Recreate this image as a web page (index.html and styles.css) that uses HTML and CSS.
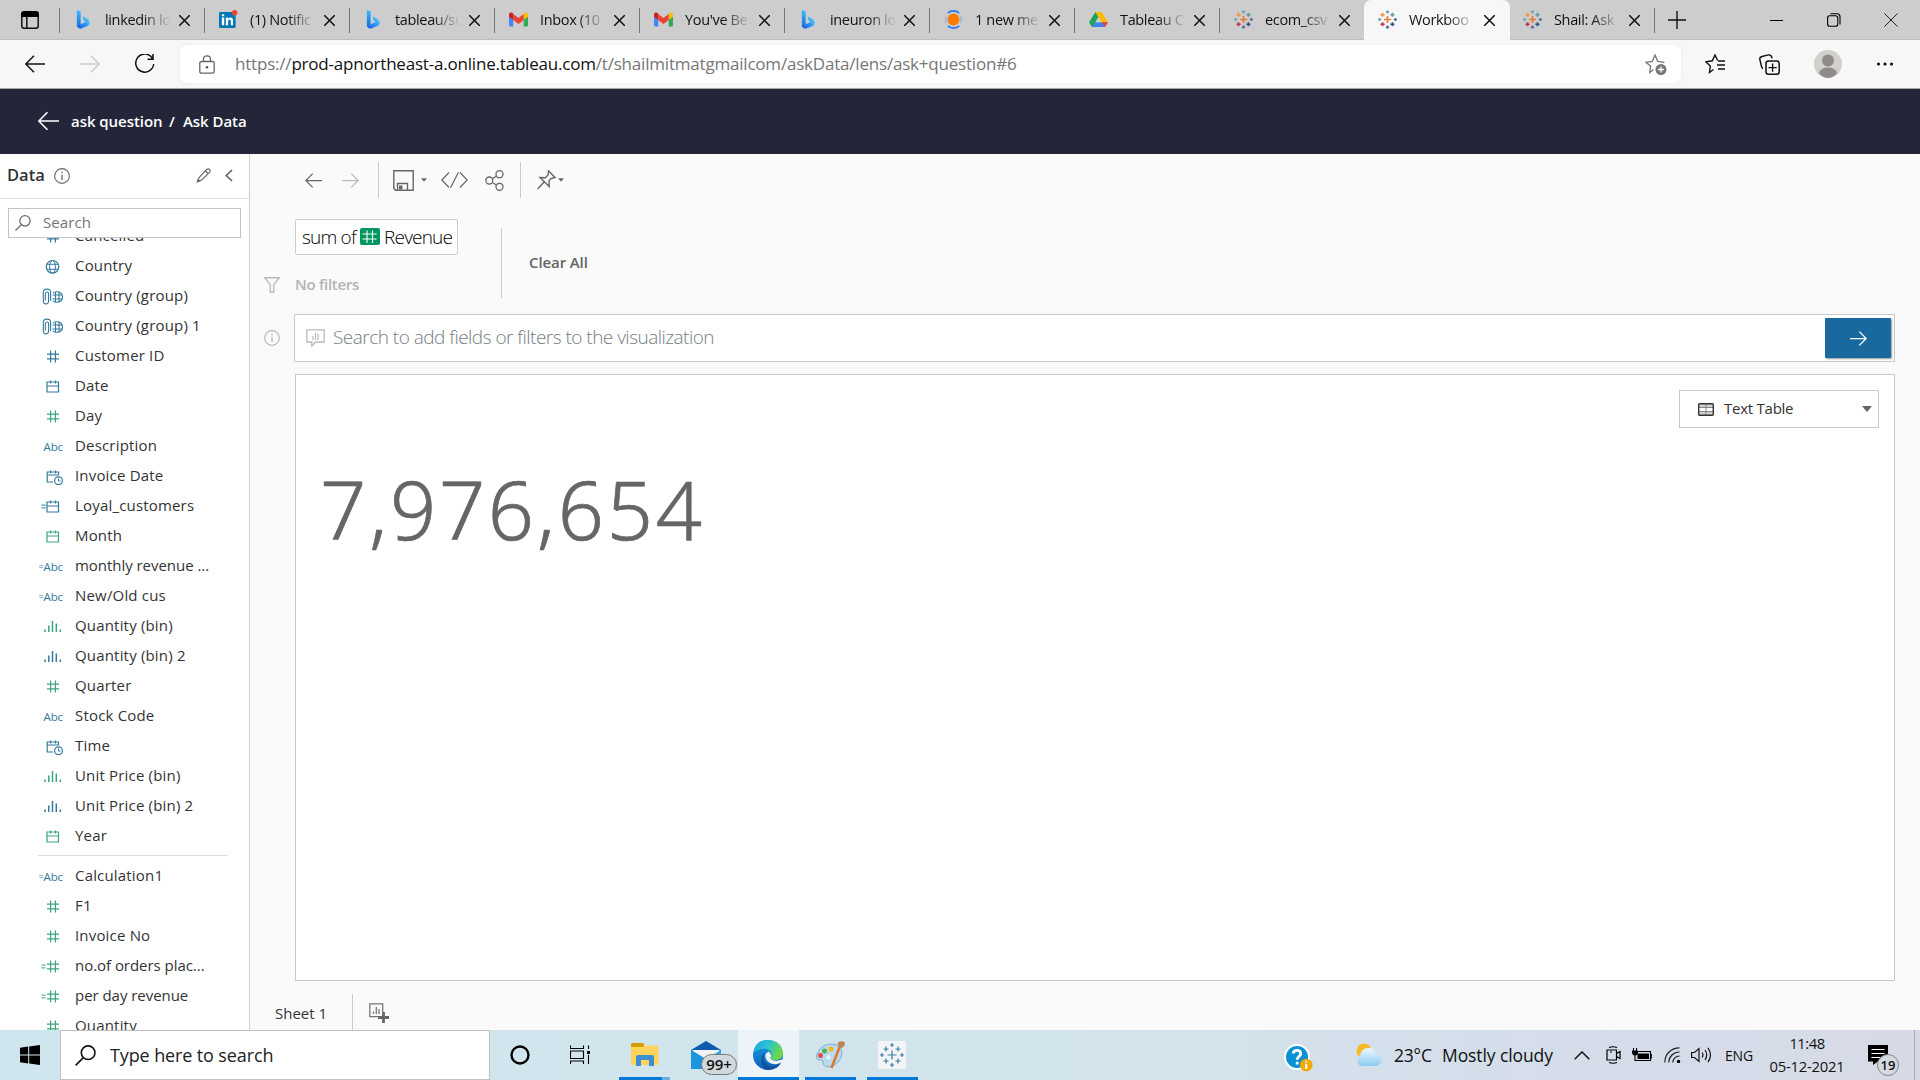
FILE: index.html
```html
<!DOCTYPE html>
<html lang="en">
<head>
<meta charset="utf-8">
<title>Ask Data</title>
<link rel="stylesheet" href="styles.css">
</head>
<body>
<svg class="defs" width="0" height="0">
  <defs>
    <linearGradient id="bingA" x1="0" y1="0" x2="0" y2="1"><stop offset="0" stop-color="#37bdff"/><stop offset="1" stop-color="#1a67dc"/></linearGradient>
    <linearGradient id="bingB" x1="0" y1="1" x2="1" y2="0"><stop offset="0" stop-color="#1b48ef"/><stop offset=".5" stop-color="#2a9af3"/><stop offset="1" stop-color="#5fe0ff"/></linearGradient>
    <linearGradient id="edgeA" x1="0" y1="0" x2="1" y2=".4"><stop offset="0" stop-color="#1b9de2"/><stop offset=".5" stop-color="#2bc3d2"/><stop offset="1" stop-color="#6bd949"/></linearGradient>
    <linearGradient id="edgeB" x1="0" y1="0" x2="0" y2="1"><stop offset="0" stop-color="#1b9de2"/><stop offset="1" stop-color="#0d60b8"/></linearGradient>
    <linearGradient id="cloud" x1="0" y1="0" x2="0" y2="1"><stop offset="0" stop-color="#eef8ff"/><stop offset="1" stop-color="#8ccbf0"/></linearGradient>
    <symbol id="bing" viewBox="0 0 14 20"><path d="M0 0 4 1.6V14.5L1.5 18.8 0 16.5Z" fill="url(#bingA)"/><path d="M6 6.5 11 9.3Q13.5 10.8 13.5 13.5 13.5 15.5 11.5 16.8L4.5 19.6Q2 20.2 0 16.8L9.2 12.5 7.2 11Z" fill="url(#bingB)"/></symbol>
    <symbol id="gmail" viewBox="0 0 19 14"><path d="M0 2V12.5Q0 14 1.5 14H4.3V6Z" fill="#4285f4"/><path d="M19 2V12.5Q19 14 17.5 14H14.7V6Z" fill="#34a853"/><path d="M0 2.2Q0 0 2 0 3 0 4.3 1.2V7.5L0 4.2Z" fill="#c5221f"/><path d="M19 2.2Q19 0 17 0 16 0 14.7 1.2V7.5L19 4.2Z" fill="#fbbc04"/><path d="M4.3 1.5 9.5 5.6 14.7 1.5V7.5L9.5 11.5 4.3 7.5Z" fill="#ea4335"/></symbol>
    <symbol id="tabl" viewBox="0 0 20 20"><g fill="none" stroke-width="1.8"><path d="M10 6.2V13.8M6.2 10H13.8" stroke="#eb7a35"/><path d="M4.8 2.8V7.2M2.6 5H7" stroke="#f0973a"/><path d="M15.2 2.8V7.2M13 5H17.4" stroke="#6c97a8"/><path d="M4.8 12.8V17.2M2.6 15H7" stroke="#c8304a"/><path d="M15.2 12.8V17.2M13 15H17.4" stroke="#2c5488"/><path d="M10 .3V3.7M8.3 2H11.7M1.7 8.3V11.7M0 10H3.4" stroke="#7aa5b8"/><path d="M10 16.3V19.7M8.3 18H11.7M18.3 8.3V11.7M16.6 10H20" stroke="#676e9c"/></g></symbol>
    <symbol id="x" viewBox="0 0 10 10"><path d="M0 0 10 10M10 0 0 10" fill="none" stroke="currentColor" stroke-width="1.4"/></symbol>
    <symbol id="left" viewBox="0 0 20 18"><path d="M20 9H1M9 .7.8 9 9 17.3" fill="none" stroke="currentColor" stroke-width="1.5"/></symbol>
    <symbol id="right" viewBox="0 0 20 18"><path d="M0 9H19M11 .7 19.2 9 11 17.3" fill="none" stroke="currentColor" stroke-width="1.5"/></symbol>
    <symbol id="info" viewBox="0 0 16 16"><circle cx="8" cy="8" r="7.4" fill="none" stroke="currentColor" stroke-width="1.1"/><path d="M8 6.7V12M8 3.8V5.2" stroke="currentColor" stroke-width="1.3"/></symbol>
    <symbol id="mag" viewBox="0 0 20 20"><circle cx="12.5" cy="7.3" r="6.5" fill="none" stroke="currentColor" stroke-width="1.5"/><path d="M8 12 .6 19.4" stroke="currentColor" stroke-width="1.5"/></symbol>
    <symbol id="caret" viewBox="0 0 10 6"><path d="M0 0H10L5 6Z" fill="currentColor"/></symbol>
    <symbol id="num" viewBox="0 0 26 16"><path d="M10.6 2V14M15.4 2V14M7 5.6H19M7 10.4H19" fill="none" stroke="currentColor" stroke-width="1.2"/></symbol>
    <symbol id="eq" viewBox="0 0 26 16"><path d="M1.4 6.6H5.6M1.4 9.4H5.6" stroke="currentColor" stroke-width="1"/></symbol>
    <symbol id="cal" viewBox="0 0 26 16"><path d="M7 3.5H18.5V13.5H7ZM7 7.5H18.5M10.5 2V5M15.5 2V5" fill="none" stroke="currentColor" stroke-width="1.2"/></symbol>
    <symbol id="calt" viewBox="0 0 26 16"><path d="M13 13.5H7.2V3.5H18.5V7M7.2 6.5H18.5M10.5 2V5M15.5 2V5" fill="none" stroke="currentColor" stroke-width="1.2"/><circle cx="18.5" cy="12.2" r="3.9" fill="none" stroke="currentColor" stroke-width="1.2"/><path d="M18.5 10V12.5H20.5" fill="none" stroke="currentColor"/></symbol>
    <symbol id="globe" viewBox="0 0 26 16"><g fill="none" stroke="currentColor"><circle cx="12.5" cy="8.3" r="6.3" stroke-width="1.2"/><ellipse cx="12.5" cy="8.3" rx="2.9" ry="6.3"/><path d="M6.7 5.8H18.3M6.7 10.8H18.3"/></g></symbol>
    <symbol id="clip" viewBox="0 0 26 16"><g fill="none" stroke="currentColor" stroke-width="1.1"><path d="M5.3 12V5.5Q5.3 3.5 7 3.5T8.6 5.5V12Q8.6 15.4 6 15.4T3.3 12V4Q3.3.6 7 .6T10.6 4V12.5"/><path d="M13 4.6Q14.3 3.2 16.5 3.2 22.5 3.2 22.5 8.5 22.5 13.7 16.5 13.7 14.3 13.7 13 12.3M12.5 6.5H22M12.5 10.5H22M15.5 3.5V13.5M19 4V13"/></g></symbol>
    <symbol id="bars" viewBox="0 0 26 16"><path d="M5 11V13.5M8.8 7V13.5M12.5 2.5V13.5M16.3 5V13.5M20.3 11V13.5" stroke="currentColor" stroke-width="1.5"/></symbol>
  </defs>
</svg>

<div class="tabs">
  <div class="tab-actions"><svg width="18" height="18" viewBox="0 0 18 18"><path d="M.8 5V15Q.8 17.2 3 17.2H15Q17.2 17.2 17.2 15V5M5.8 5V17" fill="none" stroke="#111" stroke-width="1.5"/><path d="M0 6V3Q0 0 3 0H15Q18 0 18 3V6Z" fill="#000"/></svg></div>
  <div class="tab"><svg class="fav"><use href="#bing"/></svg><span>linkedin lo</span><svg class="close"><use href="#x"/></svg></div>
  <div class="tab"><svg class="fav" viewBox="0 0 20 20"><rect y="2" width="17.5" height="17" rx="1.5" fill="#0077b5"/><path d="M3 8H5.5V16H3ZM3 4.5H5.5V6.7H3ZM7.2 8H9.5V9.2Q10.3 7.8 12 7.8 14.8 7.8 14.8 11V16H12.4V11.5Q12.4 9.9 11.2 9.9 9.6 9.9 9.6 11.5V16H7.2Z" fill="#fff"/><circle cx="16.5" cy="3" r="2.9" fill="#ef4136"/></svg><span>(1) Notific</span><svg class="close"><use href="#x"/></svg></div>
  <div class="tab"><svg class="fav"><use href="#bing"/></svg><span>tableau/su</span><svg class="close"><use href="#x"/></svg></div>
  <div class="tab"><svg class="fav"><use href="#gmail"/></svg><span>Inbox (10</span><svg class="close"><use href="#x"/></svg></div>
  <div class="tab"><svg class="fav"><use href="#gmail"/></svg><span>You've Be</span><svg class="close"><use href="#x"/></svg></div>
  <div class="tab"><svg class="fav"><use href="#bing"/></svg><span>ineuron lo</span><svg class="close"><use href="#x"/></svg></div>
  <div class="tab"><svg class="fav" viewBox="0 0 20 20"><circle cx="10" cy="10" r="6.3" fill="#ff7a00"/><path d="M4 3.2Q6.5.9 10 .9T16 3.2M4 16.8Q6.5 19.1 10 19.1T16 16.8" fill="none" stroke="#2879f6" stroke-width="1.8"/><path d="M2.3 6.5Q1 10 2.3 13.5M17.7 6.5Q19 10 17.7 13.5" fill="none" stroke="#94b5ea" stroke-width="1.5"/></svg><span>1 new me</span><svg class="close"><use href="#x"/></svg></div>
  <div class="tab"><svg class="fav" viewBox="0 0 20 18"><path d="M6.7 1H13.3L10 6.7 3.5 17.5 0 12Z" fill="#1fa15a"/><path d="M6.7 1H13.3L20 12H13.2Z" fill="#ffba00"/><path d="M6.7 12H20L16.7 17H3.5Z" fill="#3f80f2"/><path d="M13.2 12H20L16.7 17Z" fill="#ea4335"/><path d="M10 6.7 13.2 12H6.8Z" fill="#cdcdcd"/></svg><span>Tableau C</span><svg class="close"><use href="#x"/></svg></div>
  <div class="tab"><svg class="fav"><use href="#tabl"/></svg><span>ecom_csv</span><svg class="close"><use href="#x"/></svg></div>
  <div class="tab active"><svg class="fav"><use href="#tabl"/></svg><span>Workboo</span><svg class="close"><use href="#x"/></svg></div>
  <div class="tab last"><svg class="fav"><use href="#tabl"/></svg><span>Shail: Ask</span><svg class="close"><use href="#x"/></svg></div>
  <svg class="plus" viewBox="0 0 18 18"><path d="M9 0V18M0 9H18" stroke="#111" stroke-width="1.4"/></svg>
  <div class="win">
    <svg width="14" height="14" viewBox="0 0 14 14"><path d="M0 7.5H13" stroke="#000"/></svg>
    <svg width="14" height="14" viewBox="0 0 14 14"><path d="M2.5 2.7H8.5Q10.8 2.7 10.8 5V11Q10.8 13.3 8.5 13.3H2.8Q.6 13.3.6 11V5Q.6 2.7 2.5 2.7ZM3.5.7H10Q13 .7 13 3.7V11.5" fill="none" stroke="#000" stroke-width="1.1"/></svg>
    <svg width="14" height="14" viewBox="0 0 14 14"><path d="M.5.5 13.5 13.5M13.5.5.5 13.5" stroke="#222"/></svg>
  </div>
</div>

<div class="nav">
  <div class="nav-btn"><svg width="20" height="18"><use href="#left"/></svg></div>
  <div class="nav-btn off"><svg width="20" height="18"><use href="#right"/></svg></div>
  <div class="nav-btn"><svg width="21" height="20" viewBox="0 0 21 20"><path d="M18.5 4.5A9 9 0 1 0 19.7 10M19 0V5.3H13.5" fill="none" stroke="#111" stroke-width="1.5"/></svg></div>
  <div class="address">
    <svg width="16" height="19" viewBox="0 0 16 19"><path d="M2.5 6.5H13.5Q15.2 6.5 15.2 8V16.5Q15.2 18.2 13.5 18.2H2.5Q.8 18.2.8 16.5V8Q.8 6.5 2.5 6.5ZM4.5 6.5V4Q4.5.8 8 .8T11.5 4V6.5" fill="none" stroke="#666" stroke-width="1.3"/><circle cx="8" cy="12.3" r="1.3" fill="#555"/></svg>
    <div class="url">https://<b>prod-apnortheast-a.online.tableau.com</b>/t/shailmitmatgmailcom/askData/lens/ask+question#6</div>
    <svg width="22" height="21" viewBox="0 0 22 21"><path d="M8.5 15.5 4.8 18.5 5.5 12 .8 8.3 7.3 7.3 10 1 12.7 7.3 19.5 8.3" fill="none" stroke="#777" stroke-width="1.3"/><circle cx="16" cy="15.5" r="5.5" fill="#767676"/><path d="M16 12.5V18.5M13 15.5H19" stroke="#fff" stroke-width="1.3"/></svg>
  </div>
  <div class="nav-right">
    <svg width="20" height="20" viewBox="0 0 20 20"><path d="M8.5 15.5 4.5 18.5 5.3 12 .8 7.8 7.3 6.8 10 1 12.6 6.5M13 7H20M12 11H20M13 15H20" fill="none" stroke="#111" stroke-width="1.4"/></svg>
    <svg width="21" height="21" viewBox="0 0 21 21"><path d="M4 14.5Q2.8 14 2.5 12.5L.8 5.5Q.5 3 3 2.5L9.5.9Q12.5.6 13 4.3" fill="none" stroke="#111" stroke-width="1.4"/><rect x="7" y="7" width="13.2" height="13.2" rx="2.5" fill="none" stroke="#111" stroke-width="1.5"/><path d="M13.6 9.5V17.7M9.5 13.6H17.7" stroke="#111" stroke-width="1.4"/></svg>
    <svg width="28" height="28" viewBox="0 0 28 28"><circle cx="14" cy="14" r="14" fill="#d2d0cd"/><circle cx="14" cy="10.5" r="6" fill="#8f8b88"/><path d="M5 23Q6.5 17.5 14 17.5T23 23Q19 28 14 28T5 23Z" fill="#8f8b88"/></svg>
    <svg width="18" height="4" viewBox="0 0 18 4"><g fill="#111"><circle cx="2.5" cy="2" r="1.6"/><circle cx="9" cy="2" r="1.6"/><circle cx="15.5" cy="2" r="1.6"/></g></svg>
  </div>
</div>

<header class="crumbs">
  <svg width="21" height="20"><use href="#left"/></svg>
  <span class="crumb-a">ask question</span><span class="slash">/</span><span class="crumb-b">Ask Data</span>
</header>

<div class="app">
  <aside class="side">
    <div class="side-head">
      <h1>Data</h1>
      <svg class="i" width="16" height="16"><use href="#info"/></svg>
      <svg class="pen" width="15" height="15" viewBox="0 0 15 15"><path d="M3.2 9.3 10.7 1.5Q12.2.2 13.5 1.5T13.5 4.3L5.7 12 2 13.4ZM9.5 3 12 5.5" fill="none" stroke="#666" stroke-width="1.1"/><path d="M.3 14.7 1.8 10.5 4.5 13.2Z" fill="#666"/></svg>
      <svg width="8" height="13" viewBox="0 0 8 13"><path d="M7 1 1.3 6.5 7 12" fill="none" stroke="#666" stroke-width="1.7"/></svg>
    </div>
    <div class="side-search"><svg width="16" height="16"><use href="#mag"/></svg><span>Search</span></div>
    <div class="fields">
      <div class="f"><svg><use href="#num"/></svg><span>Cancelled</span></div>
      <div class="f"><svg><use href="#globe"/></svg><span>Country</span></div>
      <div class="f"><svg><use href="#clip"/></svg><span>Country (group)</span></div>
      <div class="f"><svg><use href="#clip"/></svg><span>Country (group) 1</span></div>
      <div class="f"><svg><use href="#num"/></svg><span>Customer ID</span></div>
      <div class="f"><svg><use href="#cal"/></svg><span>Date</span></div>
      <div class="f g"><svg><use href="#num"/></svg><span>Day</span></div>
      <div class="f"><i>Abc</i><span>Description</span></div>
      <div class="f"><svg><use href="#calt"/></svg><span>Invoice Date</span></div>
      <div class="f"><svg><use href="#eq"/><use href="#cal"/></svg><span>Loyal_customers</span></div>
      <div class="f g"><svg><use href="#cal"/></svg><span>Month</span></div>
      <div class="f"><i><s>=</s>Abc</i><span class="long">monthly revenue ...</span></div>
      <div class="f"><i><s>=</s>Abc</i><span>New/Old cus</span></div>
      <div class="f g"><svg><use href="#bars"/></svg><span>Quantity (bin)</span></div>
      <div class="f"><svg><use href="#bars"/></svg><span>Quantity (bin) 2</span></div>
      <div class="f g"><svg><use href="#num"/></svg><span>Quarter</span></div>
      <div class="f"><i>Abc</i><span>Stock Code</span></div>
      <div class="f"><svg><use href="#calt"/></svg><span>Time</span></div>
      <div class="f g"><svg><use href="#bars"/></svg><span>Unit Price (bin)</span></div>
      <div class="f"><svg><use href="#bars"/></svg><span>Unit Price (bin) 2</span></div>
      <div class="f g"><svg><use href="#cal"/></svg><span>Year</span></div>
      <hr>
      <div class="f"><i><s>=</s>Abc</i><span>Calculation1</span></div>
      <div class="f g"><svg><use href="#num"/></svg><span>F1</span></div>
      <div class="f g"><svg><use href="#num"/></svg><span>Invoice No</span></div>
      <div class="f g"><svg><use href="#eq"/><use href="#num"/></svg><span class="long">no.of orders plac...</span></div>
      <div class="f g"><svg><use href="#eq"/><use href="#num"/></svg><span class="long">per day revenue</span></div>
      <div class="f g"><svg><use href="#num"/></svg><span>Quantity</span></div>
    </div>
  </aside>

  <main class="main">
    <div class="tools">
      <svg class="t-back" width="17" height="15"><use href="#left"/></svg>
      <svg class="t-fwd" width="17" height="15"><use href="#right"/></svg>
      <div class="bar"></div>
      <svg class="t-save" width="21" height="21" viewBox="0 0 21 21"><path d="M.8.8H20.2V20.2H2.5L.8 18.5ZM4.5 20V13.5H14.5V20" fill="none" stroke="#666" stroke-width="1.4"/><path d="M6 15.5H9.5V19.5H6Z" fill="#666"/></svg>
      <svg class="t-c1" width="6" height="4"><use href="#caret"/></svg>
      <svg class="t-code" width="27" height="16" viewBox="0 0 27 16"><path d="M8 .5.8 8 8 15.5M19 .5 26.2 8 19 15.5M17.5.3 9.5 15.7" fill="none" stroke="#666" stroke-width="1.2"/></svg>
      <svg class="t-share" width="19" height="21" viewBox="0 0 19 21"><g fill="none" stroke="#666" stroke-width="1.3"><circle cx="4.3" cy="10.5" r="3.5"/><circle cx="14.5" cy="4.2" r="3.5"/><circle cx="14.5" cy="16.8" r="3.5"/><path d="M7.3 8.7 11.5 6M7.3 12.5 11.5 15"/></g></svg>
      <div class="bar"></div>
      <svg class="t-pin" width="19" height="20" viewBox="0 0 19 20"><path d="M11.5.8 18 7.5 14 8.5 12 11 12.2 16.5 3 7.5 8.5 7.8 11 5ZM7 12 .7 19" fill="none" stroke="#666" stroke-width="1.4"/></svg>
      <svg class="t-c2" width="6" height="4"><use href="#caret"/></svg>
    </div>

    <div class="query">
      <div class="query-left">
        <div class="pill"><span class="p1">sum of</span><svg width="20" height="17" viewBox="0 0 20 17"><rect width="20" height="17" rx="2" fill="#00965f"/><path d="M7 2.5V15M12.5 2.5V15M2.5 6H16.5M2.5 11H16.5" stroke="#fff" stroke-width="1.1"/></svg><span class="p2">Revenue</span></div>
        <div class="nofilter"><svg width="16" height="16" viewBox="0 0 16 16"><path d="M.8.8H15.2L9.8 7.5V15H6.2V7.5Z" fill="none" stroke="#bbb" stroke-width="1.4"/></svg><span>No filters</span></div>
      </div>
      <div class="clear"><span>Clear All</span></div>
    </div>

    <div class="ask">
      <svg class="ask-i" width="16" height="16"><use href="#info"/></svg>
      <div class="ask-box">
        <svg width="19" height="18" viewBox="0 0 19 18"><path d="M.8.8H18.2V13H9.5L5.8 17V13H.8Z" fill="none" stroke="#bbb" stroke-width="1.3"/><path d="M7 7V11M9.5 3.5V11M12 5V11" stroke="#bbb" stroke-width="1.2"/></svg>
        <span>Search to add fields or filters to the visualization</span>
        <div class="go"><svg width="19" height="15"><use href="#right"/></svg></div>
      </div>
    </div>

    <div class="viz">
      <div class="chart-type"><svg width="16" height="13" viewBox="0 0 16 13"><rect x=".7" y=".7" width="14.6" height="11.6" rx="1" fill="#d0d0d0"/><path d="M1 4.8H15V8.2H1Z" fill="#fff"/><path d="M.7 4.5H15.3M.7 8.5H15.3M8 .7V12" stroke="#888"/><rect x=".7" y=".7" width="14.6" height="11.6" rx="1" fill="none" stroke="#333" stroke-width="1.4"/></svg><span>Text Table</span><svg class="dd" width="10" height="6"><use href="#caret"/></svg></div>
      <div class="total">7,976,654</div>
    </div>

    <div class="sheets"><div class="sheet">Sheet 1</div><svg width="20" height="20" viewBox="0 0 20 20"><path d="M9.5 13.7H.8V.8H13.7V9" fill="none" stroke="#777" stroke-width="1.3"/><path d="M4.5 8.5V11M7.3 4V11M10 6V11" stroke="#777" stroke-width="1.3"/><path d="M14.5 9V20M9 14.5H20" stroke="#666" stroke-width="2.8"/></svg></div>
  </main>
</div>

<footer class="taskbar">
  <div class="start"><svg width="20" height="20" viewBox="0 0 20 20"><path d="M0 2.8 8.2 1.6V9.5H0ZM9.2 1.5 20 0V9.5H9.2ZM0 10.5H8.2V18.4L0 17.2ZM9.2 10.5H20V20L9.2 18.5Z"/></svg></div>
  <div class="find"><svg width="21" height="21"><use href="#mag"/></svg><span>Type here to search</span></div>
  <div class="app-i cortana"><svg width="20" height="20" viewBox="0 0 20 20"><circle cx="10" cy="10" r="8.5" fill="none" stroke="#000" stroke-width="2.4"/></svg></div>
  <div class="app-i view"><svg width="20" height="20" viewBox="0 0 20 20"><path d="M.5.5V3.5H13.5V.5M.5 19V16H13.5V19M.5 6H13.5V13.5H.5ZM18.5.5V4M18.5 10V19" fill="none" stroke="#000" stroke-width="1.1"/><path d="M17 6H20V9H17Z"/></svg></div>
  <div class="app-i files"><svg width="28" height="24" viewBox="0 0 28 24"><path d="M0 1Q0 0 1 0H12L14 2.5H26.5Q27.5 2.5 27.5 3.5V22H1Q0 22 0 21Z" fill="#ffd45c"/><path d="M0 1Q0 0 1 0H11.5Q13 0 13 1.5 13 4 11 4H0Z" fill="#d99a00"/><path d="M5 23V14Q5 12 7 12H21Q23 12 23 14V23H18V17H10V23Z" fill="#3e8ed4"/></svg></div>
  <div class="app-i mail"><svg width="30" height="28" viewBox="0 0 30 28"><path d="M0 9 15 0 30 9V12H0Z" fill="#0b5cae"/><path d="M1.5 9H28.5V18H1.5Z" fill="#f3f3f3"/><path d="M0 9 15 18 30 9V28H0Z" fill="#28a8ea"/><path d="M0 9 30 28H0Z" fill="#1b96de"/></svg><b class="cnt">99+</b></div>
  <div class="app-i edge"><svg width="30" height="30" viewBox="0 0 30 30"><circle cx="15" cy="15" r="15" fill="url(#edgeB)"/><path d="M.3 13Q1.8 0 15 0 29 1 30 13 30 20 22 20 17 20 17.5 17.5 19.5 15 18 12 15 7.5 8.5 9 2.5 10.5.3 13Z" fill="url(#edgeA)"/><path d="M12 12Q8 20 14 24.5 20 29 28 23 24 30 15 30 9 29 8.5 21 8.5 14 12 12Z" fill="#124f9e"/><path d="M15.5 11.5Q11 14 13 19 16 25 24 24 28 23 29 21.5L32 20 29 19.5Q24 21.5 19 20 16.5 18.8 18 16.5 19 14 15.5 11.5Z" fill="#edf4f9"/></svg></div>
  <div class="app-i paint"><svg width="31" height="30" viewBox="0 0 31 30"><path d="M3 12Q7 4 17 4 27 5 27 13 26 24 14 27 8 27 8 22 8 19 4 20-1 19 3 12Z" fill="#b9d9ee" stroke="#88aac5"/><circle cx="5.5" cy="15.5" r="2.5" fill="#e14b42"/><circle cx="9.5" cy="11" r="2.5" fill="#48b34b"/><circle cx="16" cy="9" r="2.6" fill="#f7b51b"/><circle cx="13.5" cy="17.5" r="2.2" fill="#e6f2fa"/><path d="M25 6 16.5 28" stroke="#d8792e" stroke-width="2.5"/><path d="M24 7 27 8Q31 5 29.5 2 24.5 0 22.5 3Z" fill="#ba8559"/></svg></div>
  <div class="app-i tab-i"><svg width="28" height="28" viewBox="0 0 28 28"><rect width="28" height="28" fill="#f3f4f5"/><path d="M14 9.5V18.5M9.5 14H18.5M8 5.5V10.5M5.5 8H10.5M20 5.5V10.5M17.5 8H22.5M8 17.5V22.5M5.5 20H10.5M20 17.5V22.5M17.5 20H22.5M14 2V6M12 4H16M14 22V26M12 24H16M4 12V16M2 14H6M24 12V16M22 14H26" stroke="#3c7ca6" stroke-width="1.2"/></svg></div>
  <div class="tray">
    <svg class="help" width="29" height="32" viewBox="0 0 29 32"><circle cx="13" cy="15" r="13" fill="#fff"/><circle cx="13" cy="15" r="11" fill="#0a90d4"/><path d="M9.3 11.5Q9.3 8.3 13 8.3T16.7 11.8Q16.7 13.5 14.5 15 13.2 16 13.2 17.8M13.2 19.8V22.5" fill="none" stroke="#fff" stroke-width="2.8"/><circle cx="22.3" cy="23" r="6.3" fill="#f2a900"/><path d="M22.3 21.8V27M22.3 18.8V20.6" stroke="#fff" stroke-width="2"/></svg>
    <svg class="wx" width="26" height="24" viewBox="0 0 26 24"><circle cx="8" cy="8" r="7.5" fill="#f9b92c"/><path d="M6 23Q1 22 1.500 17.500 2.500 13.500 4 12 6 5 12 5 18.500 5 19.500 10 25 11 25.500 17 24.500 23 19 23Z" fill="url(#cloud)"/></svg>
    <span class="deg">23°C</span><span class="wtext">Mostly cloudy</span>
    <svg class="chev" width="16" height="9" viewBox="0 0 16 9"><path d="M.7 8.3 8 .9 15.3 8.3" fill="none" stroke="#111" stroke-width="1.4"/></svg>
    <svg class="cam" width="15" height="18" viewBox="0 0 15 18"><path d="M1 4H10.5V14H1ZM10.5 7.5 14 5.5V12.5L10.5 10.5M3 1.5Q7 0 11 1.5M3 16.5Q7 18 11 16.5" fill="none" stroke="#000" stroke-width="1.2"/><path d="M4 6H6" stroke="#000"/></svg>
    <svg class="bat" width="20" height="14" viewBox="0 0 20 14"><path d="M6 3.5H18.5V12.5H3V8M18.5 6.5H19.8V10H18.5M1.5 0V3M4.5 0V3M3 7V10" fill="none" stroke="#000" stroke-width="1.1"/><path d="M5.5 5.5H17V11H5.5ZM0 2.5H6V5Q5.5 7.5 3 7.5T0 5Z"/></svg>
    <svg class="wifi" width="17" height="16" viewBox="0 0 17 16"><path d="M.8 15.5A14.5 14.5 0 0 1 15.5.8M4.8 15.5A10.5 10.5 0 0 1 15.5 5M8.8 15.5A6.8 6.8 0 0 1 15.5 9" fill="none" stroke="#222" stroke-width="1.2"/><circle cx="14.5" cy="14.5" r="1.7"/></svg>
    <svg class="vol" width="21" height="16" viewBox="0 0 21 16"><path d="M.6 5.5H3.5L8 1.5V14.5L3.5 10.5H.6ZM11 5.5Q13 8 11 10.5M14 3Q17.5 8 14 13M17 .8Q22 8 17 15.2" fill="none" stroke="#111" stroke-width="1.2"/></svg>
    <span class="eng">ENG</span>
    <div class="clock"><div class="time">11:48</div><div class="date">05-12-2021</div></div>
    <div class="note"><svg width="20" height="20" viewBox="0 0 20 20"><path d="M0 0H20V16.5H10L5 20V16.5H0Z"/><path d="M3.5 4.5H16.5M3.5 8.5H16.5M3.5 12.5H12" stroke="#fff" stroke-width="1.2"/></svg><b>19</b></div>
    <div class="desk"></div>
  </div>
</footer>
</body>
</html>
```
FILE: styles.css
```css
* { box-sizing: border-box; }
body { margin: 0; width: 1920px; height: 1080px; overflow: hidden; font-family: "Open Sans", "Noto Sans", sans-serif; font-size: 15px; color: #111; background: #fafafa; display: flex; flex-direction: column; white-space: nowrap; }
svg { display: block; flex: none; }
.defs { position: absolute; }
span { flex: none; }

/* browser tabs */
.tabs { height: 40px; flex: none; display: flex; align-items: center; background: #cdcdcd; border-bottom: 1px solid #bdbdbd; }
.tab-actions { width: 59px; padding-left: 21px; }
.tab { width: 145px; height: 39px; flex: none; display: flex; align-items: center; padding-left: 15px; background: linear-gradient(#777, #777) 0 8px / 1px 25px no-repeat; }
.tab .fav { width: 19px; height: 19px; }
.tab span { width: 68px; margin-left: 12px; overflow: hidden; font-size: 14.5px; letter-spacing: -.35px; color: #111; -webkit-mask-image: linear-gradient(90deg, #000 55%, transparent 97%); mask-image: linear-gradient(90deg, #000 55%, transparent 97%); }
.tab .close { width: 11px; height: 11px; margin: 2px 0 0 6px; }
.tab.active { width: 146px; height: 40px; padding-left: 14px; background: #f7f7f7; border-radius: 7px 7px 0 0; }
.tab.active .close { margin-left: 7px; }
.tab.last { background-position: 144px 8px; padding-left: 13px; }
.tab.last .close { margin-left: 7px; }
.plus { width: 18px; height: 18px; margin-left: 13px; }
.win { margin-left: auto; display: flex; gap: 43px; padding-right: 22px; }

/* address row */
.nav { height: 49px; flex: none; display: flex; align-items: center; background: #f7f7f7; border-bottom: 1px solid #aaa; padding-left: 7px; }
.nav-btn { width: 55px; display: flex; justify-content: center; }
.nav-btn.off { color: #ccc; }
.address { width: 1501px; height: 38px; margin-left: 8px; display: flex; align-items: center; background: #fff; border-radius: 6px; padding: 0 14px 0 19px; box-shadow: 0 0 3px #e4e4e4; }
.url { margin-left: 20px; flex: 1; font-size: 17px; letter-spacing: -.2px; padding-bottom: 2px; color: #767676; }
.url b { font-weight: 400; color: #111; }
.nav-right { display: flex; align-items: center; padding-left: 24px; gap: 34px; }

.crumbs { height: 65px; flex: none; display: flex; align-items: center; background: #232638; color: #fff; padding: 0 0 2px 38px; font-weight: 600; font-size: 15px; letter-spacing: -.05px; }
.crumb-a { margin-left: 12px; width: 98px; }
.slash { width: 14px; }

/* data pane */
.app { height: 876px; flex: none; display: flex; }
.side { width: 250px; height: 876px; flex: none; background: #fff; border-right: 1px solid #d0d0d0; display: flex; flex-direction: column; }
.side-head { height: 45px; flex: none; display: flex; align-items: center; padding: 0 16px 1px 7px; border-bottom: 1px solid #e0e0e0; color: #666; }
.side-head h1 { margin: 0; width: 47px; padding-bottom: 3px; font-size: 16.5px; font-weight: 600; color: #333; }
.pen { margin: 0 14px 0 auto; }
.side-search { height: 30px; margin: 9px 8px 0; flex: none; display: flex; align-items: center; border: 1px solid #c4c4c4; padding-left: 6px; color: #666; }
.side-search span { margin-left: 12px; padding-bottom: 2px; letter-spacing: .1px; color: #757575; }
.fields { flex: 1; min-height: 0; overflow: hidden; }
.fields > :first-child { margin-top: -17px; }
.f { height: 30px; display: flex; align-items: center; padding-left: 40px; color: #337a9e; }
.f.g { color: #3da57c; }
.f svg { width: 26px; height: 17px; overflow: visible; margin-top: 1px; }
.f i { width: 26px; font-style: normal; font-size: 11.5px; letter-spacing: -.1px; display: flex; justify-content: flex-end; padding-right: 3px; flex: none; }
.f s { text-decoration: none; font-size: 9px; align-self: center; line-height: 1; }
.f span { margin-left: 9px; padding-bottom: 2px; letter-spacing: .18px; color: #333; }
.f .long { letter-spacing: -.04px; }
.fields hr { margin: 4px 21px 5px 38px; border: 0; height: 1px; background: #ddd; }

/* workspace */
.main { flex: 1; padding-left: 14px; display: flex; flex-direction: column; color: #666; }
.tools { height: 52px; flex: none; display: flex; align-items: center; padding-left: 41px; }
.bar { width: 1px; height: 36px; background: #ccc; }
.t-fwd { margin: 0 19px 0 20px; color: #bbb; }
.t-save { margin-left: 14px; }
.t-c1 { margin: 0 14px 0 7px; }
.t-share { margin: 0 16px 0 17px; }
.t-pin { margin-left: 16px; }
.t-c2 { margin-left: 2px; }
.query { height: 108px; flex: none; display: flex; padding-top: 13px; }
.query-left { width: 237px; }
.pill { margin-left: 31px; width: 163px; height: 36px; display: flex; align-items: center; padding-left: 6px; background: #fff; border: 1px solid #ccc; border-radius: 2px; color: #000; font-size: 19px; font-weight: 300; letter-spacing: -.8px; }
.pill svg { margin: -1px 4px 0 0; }
.p1 { width: 58px; }
.nofilter { display: flex; align-items: center; margin-top: 19px; color: #b4b4b4; }
.nofilter span { margin-left: 15px; padding-bottom: 1px; font-weight: 600; letter-spacing: -.3px; }
.clear { height: 70px; margin-top: 9px; border-left: 1px solid #ccc; padding: 0 0 2px 27px; display: flex; align-items: center; font-weight: 600; letter-spacing: -.1px; }
.ask { display: flex; align-items: center; height: 48px; flex: none; color: #b4b4b4; }
.ask-box { width: 1601px; height: 48px; margin-left: 14px; display: flex; align-items: center; background: #fff; border: 1px solid #c8c8c8; padding: 0 3px 0 11px; color: #757d82; font-size: 19px; font-weight: 300; }
.ask-box span { margin-left: 8px; padding-bottom: 2px; letter-spacing: -.52px; }
.go { width: 66px; height: 40px; margin-left: auto; display: flex; align-items: center; justify-content: center; background: #1a699e; color: #fff; border-radius: 1px; box-shadow: 1px 1px 2px #999; }
.viz { width: 1600px; height: 607px; flex: none; margin: 12px 0 0 31px; background: #fff; border: 1px solid #c8c8c8; padding-top: 15px; }
.chart-type { width: 200px; height: 38px; margin-left: 1383px; display: flex; align-items: center; padding: 0 6px 0 18px; border: 1px solid #c8c8c8; color: #333; }
.chart-type span { margin-left: 10px; padding-bottom: 2px; letter-spacing: -.25px; }
.dd { margin-left: auto; color: #666; }
.total { margin: 26px 0 0 24px; font-family: "Noto Sans", "Open Sans", sans-serif; font-size: 81px; line-height: 110px; font-weight: 300; letter-spacing: 2.7px; color: #666; -webkit-text-stroke: .7px #666; }
.sheets { flex: 1; display: flex; align-items: center; padding-top: 13px; }
.sheet { width: 89px; height: 36px; line-height: 39px; padding-left: 11px; margin-right: 16px; border-right: 1px solid #ccc; color: #333; }
.sheets svg { margin-top: 2px; }

/* taskbar */
.taskbar { height: 50px; flex: none; display: flex; background: linear-gradient(90deg, #cfe6ee, #d2e4ec 55%, #d5dce9 85%, #d6dae6); color: #111; }
.start { width: 60px; padding: 15px 0 0 20px; }
.find { width: 430px; display: flex; align-items: center; padding-left: 14px; background: #fff; border: 1px solid #c0c0c0; }
.find span { margin-left: 14px; font-size: 18px; letter-spacing: -.12px; color: #222; }
.app-i { display: flex; align-items: center; justify-content: center; border-bottom: 3px solid #0078d7; padding-top: 3px; position: relative; }
.cortana { width: 60px; border-color: transparent; }
.view { width: 60px; margin-right: 9px; border-color: transparent; }
.files { width: 51px; border-image: linear-gradient(90deg, #0078d7 80%, #66afe6 80%) 3; border-width: 0 0 3px; border-style: solid; }
.mail { width: 68px; border-color: transparent; justify-content: flex-start; padding-left: 21px; }
.cnt { position: absolute; left: 31px; top: 24px; width: 36px; height: 21px; border: 1px solid #777; border-radius: 11px; background: #d2d8dc; font-size: 15px; line-height: 18px; text-align: center; font-weight: 600; }
.edge { width: 61px; background: #edf4f9; padding-right: 1px; }
.paint { width: 51px; margin-left: 6px; }
.tab-i { width: 51px; margin-left: 11px; padding-right: 2px; }
.tray { flex: 1; display: flex; align-items: center; font-size: 17.5px; }
.help { margin: 5px 0 0 366px; }
.wx { margin-left: 43px; }
.deg { margin-left: 12px; width: 48px; letter-spacing: -.2px; }
.wtext { width: 132px; letter-spacing: -.1px; }
.cam { margin-left: 16px; }
.bat { margin-left: 11px; }
.wifi { margin-left: 12px; }
.vol { margin-left: 10px; }
.eng { margin-left: 13px; width: 29px; font-size: 14px; letter-spacing: -.2px; }
.clock { width: 76px; margin-left: 15px; font-size: 14.8px; text-align: center; letter-spacing: -.2px; }
.clock div { line-height: 23px; }
.time { letter-spacing: -.5px; }
.note { width: 45px; margin-left: 23px; position: relative; }
.note b { position: absolute; left: 9px; top: 9px; width: 22px; height: 22px; border: 1px solid #888; border-radius: 50%; background: #d5d9e0; font-size: 13px; font-weight: 600; line-height: 20px; text-align: center; }
.desk { width: 1px; height: 50px; margin-left: 1px; background: #aab; }
```
